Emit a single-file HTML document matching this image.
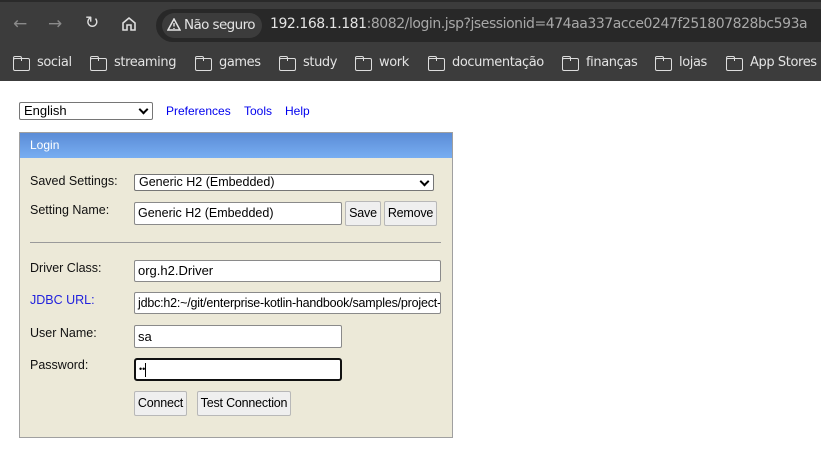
<!DOCTYPE html>
<html><head><meta charset="utf-8"><style>
*{box-sizing:border-box;margin:0;padding:0}
body{width:821px;height:451px;background:#fff;position:relative;overflow:hidden;font-family:"Liberation Sans",Arial,sans-serif;font-size:12px;color:#000}
.a{position:absolute;white-space:nowrap}
#chrome{left:0;top:0;width:821px;height:81px;background:#3c3c3c;border-top:2px solid #2a2a2a}
.ic{position:absolute;color:#ddd;font-family:"DejaVu Sans",sans-serif}
#url{left:156px;top:7px;width:680px;height:33px;background:#282828;border-radius:17px}
#ns{left:162px;top:11px;width:100px;height:25px;background:#3c3c3c;border-radius:13px;color:#e3e3e3;font-size:13.5px;font-family:"DejaVu Sans",sans-serif;line-height:25px;padding-left:22px;letter-spacing:-0.6px}
.bm{position:absolute;top:52px;color:#e3e3e3;font-family:"DejaVu Sans",sans-serif;font-size:13px;letter-spacing:-0.4px;padding-left:24px;line-height:18px;white-space:nowrap}
.bm:before{content:"";position:absolute;left:0;top:4px;width:15px;height:11px;border:1.6px solid #ddd;border-radius:2px}
.bm:after{content:"";position:absolute;left:0;top:2px;width:7px;height:4px;border:1.6px solid #ddd;border-bottom:none;border-radius:2px 2px 0 0}
.lnk{color:#0000ee;font-size:12px}
.sel{background:#fff;border:1px solid #767676;border-radius:2px;font-size:13px;line-height:15px;padding-left:4px}
.sel:after{content:"";position:absolute;right:5px;top:3px;width:5px;height:5px;border-right:2px solid #000;border-bottom:2px solid #000;transform:rotate(45deg)}
.inp{background:#fff;border:1px solid #8a8a8a;border-radius:2px;font-size:13px;padding-left:3px;overflow:hidden}
.btn{background:#efefef;border:1px solid #b8b8b8;border-radius:2px;font-size:12.5px;text-align:center;letter-spacing:-0.2px}
.lbl{font-size:12.5px;color:#111}
</style></head><body>
<div id="chrome" class="a">
  <div class="ic" style="left:13px;top:12px;font-size:17px;color:#8a8a8a">←</div>
  <div class="ic" style="left:48px;top:12px;font-size:17px;color:#8a8a8a">→</div>
  <div class="ic" style="left:85px;top:11px;font-size:17px">↻</div>
  <svg class="a" style="left:121px;top:14px" width="16" height="16" viewBox="0 0 16 16"><path d="M2 7L8 2L14 7V14H10V9H6V14H2Z" fill="none" stroke="#ddd" stroke-width="1.6"/></svg>
  <div id="url" class="a"></div>
  <div id="ns" class="a">Não seguro</div>
  <svg class="a" style="left:167px;top:16px" width="14" height="13" viewBox="0 0 14 13"><path d="M7 1L13 12H1Z" fill="none" stroke="#e3e3e3" stroke-width="1.5"/><path d="M7 5V8.5M7 10V11" stroke="#e3e3e3" stroke-width="1.4"/></svg>
  <div class="a" style="left:270px;top:14px;font-family:'DejaVu Sans',sans-serif;font-size:14px;color:#e3e3e3;letter-spacing:-0.45px">192.168.1.181<span style="color:#a8a8a8">:8082/login.jsp?jsessionid=474aa337acce0247f251807828bc593a</span></div>
  <div class="bm" style="left:13px">social</div>
  <div class="bm" style="left:90px">streaming</div>
  <div class="bm" style="left:195px">games</div>
  <div class="bm" style="left:279px">study</div>
  <div class="bm" style="left:355px">work</div>
  <div class="bm" style="left:428px">documentação</div>
  <div class="bm" style="left:562px">finanças</div>
  <div class="bm" style="left:655px">lojas</div>
  <div class="bm" style="left:726px">App Stores</div>
</div>

<div class="a sel" style="left:19px;top:102px;width:134px;height:18px">English</div>
<div class="a lnk" style="left:166px;top:104px">Preferences</div>
<div class="a lnk" style="left:244px;top:104px">Tools</div>
<div class="a lnk" style="left:285px;top:104px">Help</div>

<div class="a" style="left:19px;top:132px;width:434px;height:306px;background:#ece9d8;border:1px solid #a0a0a0">
  <div style="height:25px;background:linear-gradient(#5b8cd6,#78aef2);color:#fff;font-size:12px;line-height:25px;padding-left:10px">Login</div>
</div>

<div class="a lbl" style="left:30px;top:174px">Saved Settings:</div>
<div class="a sel" style="left:134px;top:174px;width:300px;height:17px;font-size:12.5px">Generic H2 (Embedded)</div>
<div class="a lbl" style="left:30px;top:203px">Setting Name:</div>
<div class="a inp" style="left:134px;top:202px;width:208px;height:23px;line-height:21px;font-size:12.5px">Generic H2 (Embedded)</div>
<div class="a btn" style="left:345px;top:201px;width:36px;height:25px;line-height:23px">Save</div>
<div class="a btn" style="left:384px;top:201px;width:53px;height:25px;line-height:23px">Remove</div>
<div class="a" style="left:30px;top:242px;width:411px;height:1px;background:#9a9a9a"></div>

<div class="a lbl" style="left:30px;top:261px">Driver Class:</div>
<div class="a inp" style="left:134px;top:260px;width:307px;height:22px;line-height:20px">org.h2.Driver</div>
<div class="a lbl" style="left:30px;top:293px;color:#2222dd">JDBC URL:</div>
<div class="a inp" style="left:134px;top:292px;width:307px;height:22px;line-height:20px;font-size:12.5px;letter-spacing:-0.2px">jdbc:h2:~/git/enterprise-kotlin-handbook/samples/project-</div>
<div class="a lbl" style="left:30px;top:326px">User Name:</div>
<div class="a inp" style="left:134px;top:325px;width:208px;height:23px;line-height:21px">sa</div>
<div class="a lbl" style="left:30px;top:358px">Password:</div>
<div class="a inp" style="left:134px;top:358px;width:208px;height:23px;line-height:19px;border:2px solid #111;border-radius:3px;font-size:9px">••<span style="display:inline-block;width:1px;height:14px;background:#000;vertical-align:middle"></span></div>
<div class="a btn" style="left:134px;top:391px;width:53px;height:25px;line-height:23px">Connect</div>
<div class="a btn" style="left:197px;top:391px;width:94px;height:25px;line-height:23px">Test Connection</div>
</body></html>
